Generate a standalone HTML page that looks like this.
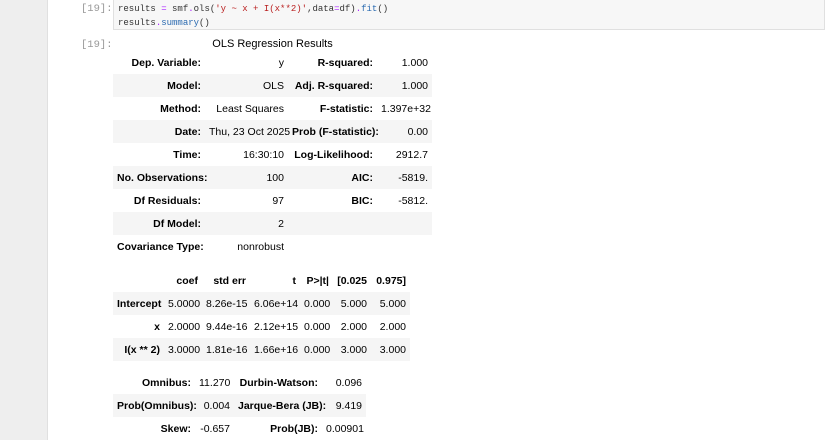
<!DOCTYPE html><html style="overflow:hidden"><head><style>
html,body{margin:0;width:825px;height:440px;overflow:hidden}
body{background:#fff;font-family:"Liberation Sans",sans-serif;font-size:10.5px;color:#000;position:relative}
.l{position:absolute;left:0;top:0;width:47px;height:440px;background:#eeeeee}
.ln{position:absolute;left:47px;top:0;width:1px;height:440px;background:#e0e0e0}
.pr{position:absolute;left:81px;font-family:"Liberation Mono",monospace;font-size:10.5px;color:#999}
.code{position:absolute;left:113px;top:-1px;width:712px;height:31px;background:#f7f7f7;border:1px solid #e0e0e0;box-sizing:border-box;font-family:"Liberation Mono",monospace;font-size:9px;line-height:14px;padding:2px 0 0 4px;color:#333}
.k{color:#a2f}.s{color:#ba2121}.f{color:#2a6ab0}
table{position:absolute;left:113px;border-collapse:collapse;table-layout:fixed}
td,th{height:23px;padding:0 4px;text-align:right;white-space:nowrap;overflow:visible}
th{font-weight:bold}
tr.g{background:#f5f5f5}
.t{position:absolute;left:113px;width:319px;text-align:center;top:38px;font-size:11px}
</style></head><body>
<div class="l"></div><div class="ln"></div>
<div class="pr" style="top:3px">[19]:</div>
<div class="code">results <span class="k">=</span> smf<span class="k">.</span>ols(<span class="s">'y ~ x + I(x**2)'</span>,data<span class="k">=</span>df)<span class="k">.</span><span class="f">fit</span>()<br>results<span class="k">.</span><span class="f">summary</span>()</div>
<div class="pr" style="top:39px">[19]:</div>
<div class="t">OLS Regression Results</div>
<table style="top:51px;width:319px">
<colgroup><col style="width:92px"><col style="width:83px"><col style="width:89px"><col style="width:55px"></colgroup>
<tr><th>Dep. Variable:</th><td>y</td><th>R-squared:</th><td>1.000</td></tr>
<tr class="g"><th>Model:</th><td>OLS</td><th>Adj. R-squared:</th><td>1.000</td></tr>
<tr><th>Method:</th><td>Least Squares</td><th>F-statistic:</th><td>1.397e+32</td></tr>
<tr class="g"><th>Date:</th><td>Thu, 23 Oct 2025</td><th>Prob (F-statistic):</th><td>0.00</td></tr>
<tr><th>Time:</th><td>16:30:10</td><th>Log-Likelihood:</th><td>2912.7</td></tr>
<tr class="g"><th>No. Observations:</th><td>100</td><th>AIC:</th><td>-5819.</td></tr>
<tr><th>Df Residuals:</th><td>97</td><th>BIC:</th><td>-5812.</td></tr>
<tr class="g"><th>Df Model:</th><td>2</td><th></th><td></td></tr>
<tr><th>Covariance Type:</th><td>nonrobust</td><th></th><td></td></tr>
</table>
<table style="top:269px;width:297px">
<colgroup><col style="width:51px"><col style="width:38px"><col style="width:48px"><col style="width:50px"><col style="width:33px"><col style="width:38px"><col style="width:39px"></colgroup>
<tr><th></th><th>coef</th><th>std err</th><th>t</th><th>P&gt;|t|</th><th>[0.025</th><th>0.975]</th></tr>
<tr class="g"><th>Intercept</th><td>5.0000</td><td>8.26e-15</td><td>6.06e+14</td><td>0.000</td><td>5.000</td><td>5.000</td></tr>
<tr><th>x</th><td>2.0000</td><td>9.44e-16</td><td>2.12e+15</td><td>0.000</td><td>2.000</td><td>2.000</td></tr>
<tr class="g"><th>I(x ** 2)</th><td>3.0000</td><td>1.81e-16</td><td>1.66e+16</td><td>0.000</td><td>3.000</td><td>3.000</td></tr>
</table>
<table style="top:371px;width:253px">
<colgroup><col style="width:82px"><col style="width:39px"><col style="width:88px"><col style="width:44px"></colgroup>
<tr><th>Omnibus:</th><td>11.270</td><th>Durbin-Watson:</th><td>0.096</td></tr>
<tr class="g"><th>Prob(Omnibus):</th><td>0.004</td><th>Jarque-Bera (JB):</th><td>9.419</td></tr>
<tr><th>Skew:</th><td>-0.657</td><th>Prob(JB):</th><td>0.00901</td></tr>
</table>
<div style="position:absolute;left:113px;top:440px;width:253px;height:1px;background:#f5f5f5"></div>
</body></html>
